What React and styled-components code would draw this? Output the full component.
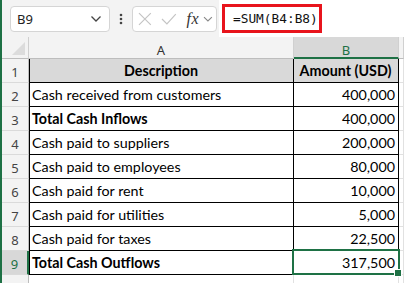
import React from "react";
import styled, { createGlobalStyle } from "styled-components";

const Global = createGlobalStyle`
  html, body { margin: 0; padding: 0; background: #ffffff; }
  body { width: 404px; height: 283px; overflow: hidden; border-left: 2px solid #1e7145; box-sizing: border-box; }
`;

const Page = styled.div`
  width: 402px;
  height: 283px;
  overflow: hidden;
  display: flex;
  flex-direction: column;
  background: #f3f3f3;
`;

const Toolbar = styled.div`
  height: 37px;
  flex: none;
  display: flex;
  align-items: center;
  background: #f3f3f3;
`;

const NameBox = styled.div`
  margin-left: 8px;
  width: 100px;
  height: 26px;
  box-sizing: border-box;
  border: 1px solid #d5d5d5;
  border-radius: 4px;
  background: #fff;
  display: flex;
  align-items: center;
  justify-content: space-between;
  padding: 0 7px 0 6px;
  font-family: "Noto Sans", "Open Sans", sans-serif;
  font-size: 13px;
  color: #222;
`;

const Dots = styled.div`
  width: 22px;
  display: flex;
  justify-content: center;
`;

const FxBox = styled.div`
  width: 85px;
  height: 26px;
  box-sizing: border-box;
  border: 1px solid #d5d5d5;
  border-radius: 4px;
  background: #fff;
  display: flex;
  align-items: center;
  padding: 0 3px 0 5px;
`;

const Fx = styled.span`
  font-family: "Liberation Serif", "DejaVu Serif", serif;
  font-style: italic;
  font-size: 16px;
  color: #333;
  margin-left: 10px;
  margin-right: 4px;
  letter-spacing: 0.5px;
`;

const FormulaInput = styled.div`
  flex: 1;
  align-self: stretch;
  margin-left: 2px;
  background: #fff;
  display: flex;
  align-items: center;
  padding-left: 3px;
`;

const Highlight = styled.div`
  width: 100px;
  height: 29px;
  box-sizing: border-box;
  border: 3px solid #e8141c;
  display: flex;
  align-items: center;
  padding-left: 8px;
  font-family: "DejaVu Sans Mono", "Liberation Mono", monospace;
  font-size: 12.8px;
  color: #111;
`;

const Sheet = styled.div`
  flex: 1;
  display: grid;
  grid-template-columns: 27px 265px 105px 1fr;
  grid-template-rows: 22px repeat(9, 24px) 24px;
  background: #fff;
`;

const Corner = styled.div`
  background: #f3f3f3;
  border-right: 1px solid #cfcfcf;
  border-bottom: 1px solid #bdbdbd;
  position: relative;
  &::after {
    content: "";
    position: absolute;
    right: 3px;
    bottom: 3px;
    width: 0;
    height: 0;
    border-left: 13px solid transparent;
    border-bottom: 13px solid #dcdcdc;
  }
`;

const ColHead = styled.div`
  background: ${(p) => (p.$active ? "#d8d8d8" : "#f3f3f3")};
  border-right: 1px solid #d0d0d0;
  border-bottom: ${(p) => (p.$active ? "2px solid #1e7145" : "1px solid #bdbdbd")};
  display: flex;
  align-items: center;
  justify-content: center;
  font-family: "Noto Sans", "Open Sans", sans-serif;
  font-size: 13px;
  color: ${(p) => (p.$active ? "#1e7145" : "#333")};
  padding-top: ${(p) => (p.$active ? "6px" : "5px")};
`;

const RowHead = styled.div`
  background: ${(p) => (p.$active ? "#d8d8d8" : "#f3f3f3")};
  border-right: ${(p) => (p.$active ? "2px solid #1e7145" : "1px solid #bdbdbd")};
  border-bottom: 1px solid #dadada;
  display: flex;
  align-items: center;
  justify-content: center;
  font-family: "Noto Sans", "Open Sans", sans-serif;
  font-size: 13px;
  color: ${(p) => (p.$active ? "#1e7145" : "#444")};
  padding-top: 3px;
`;

const Cell = styled.div`
  position: relative;
  box-sizing: border-box;
  background: ${(p) => (p.$fill ? "#d9d9d9" : "#fff")};
  border-right: 1px solid #000;
  border-bottom: 1px solid #000;
  border-left: ${(p) => (p.$first ? "1px solid #000" : "none")};
  display: flex;
  align-items: flex-end;
  justify-content: ${(p) => (p.$align === "right" ? "flex-end" : p.$align === "center" ? "center" : "flex-start")};
  padding: 0 3px 3px 2px;
  font-family: "Lato", "Liberation Sans", sans-serif;
  font-size: 14.3px;
  font-weight: ${(p) => (p.$bold ? 700 : 400)};
  color: #000;
  white-space: nowrap;
`;

const Selection = styled.span`
  position: absolute;
  left: -2px;
  top: -2px;
  right: -2px;
  bottom: -1px;
  border: 2px solid #1e7145;
  pointer-events: none;
  &::after {
    content: "";
    position: absolute;
    right: -4px;
    bottom: -4px;
    width: 6px;
    height: 6px;
    background: #1e7145;
    border: 1px solid #fff;
  }
`;

const Blank = styled.div`
  background: #fff;
  border-right: 1px solid #e1e1e1;
  border-bottom: 1px solid #e1e1e1;
`;

const rows = [
  ["Description", "Amount (USD)", "header"],
  ["Cash received from customers", "400,000"],
  ["Total Cash Inflows", "400,000", "bold"],
  ["Cash paid to suppliers", "200,000"],
  ["Cash paid to employees", "80,000"],
  ["Cash paid for rent", "10,000"],
  ["Cash paid for utilities", "5,000"],
  ["Cash paid for taxes", "22,500"],
  ["Total Cash Outflows", "317,500", "bold"],
];

const Chevron = () => (
  <svg width="12" height="8" viewBox="0 0 12 8">
    <path d="M1.5 1.5 L6 6 L10.5 1.5" fill="none" stroke="#444" strokeWidth="1.3" />
  </svg>
);

export default function App() {
  return (
    <>
      <Global />
      <Page>
        <Toolbar>
          <NameBox>
            <span>B9</span>
            <Chevron />
          </NameBox>
          <Dots>
            <svg width="4" height="12" viewBox="0 0 4 12">
              <circle cx="2" cy="2" r="1.3" fill="#444" />
              <circle cx="2" cy="6" r="1.3" fill="#444" />
              <circle cx="2" cy="10" r="1.3" fill="#444" />
            </svg>
          </Dots>
          <FxBox>
            <svg width="14" height="14" viewBox="0 0 14 14">
              <path d="M1 1 L13 13 M13 1 L1 13" stroke="#c4c4c4" strokeWidth="1.2" fill="none" />
            </svg>
            <svg width="16" height="14" viewBox="0 0 16 14" style={{ marginLeft: 9 }}>
              <path d="M1 7 L6 12 L15 2" stroke="#c4c4c4" strokeWidth="1.2" fill="none" />
            </svg>
            <Fx>fx</Fx>
            <svg width="10" height="6" viewBox="0 0 10 6">
              <path d="M1 1 L5 5 L9 1" fill="none" stroke="#888" strokeWidth="1.1" />
            </svg>
          </FxBox>
          <FormulaInput>
            <Highlight>=SUM(B4:B8)</Highlight>
          </FormulaInput>
        </Toolbar>
        <Sheet>
          <Corner />
          <ColHead>A</ColHead>
          <ColHead $active>B</ColHead>
          <ColHead />
          {rows.map(([a, b, kind], i) => {
            const header = kind === "header";
            const bold = header || kind === "bold";
            const selected = i === 8;
            return (
              <React.Fragment key={i}>
                <RowHead $active={selected}>{i + 1}</RowHead>
                <Cell $first $fill={header} $bold={bold} $align={header ? "center" : "left"}>
                  {a}
                </Cell>
                <Cell $fill={header} $bold={header} $align={header ? "center" : "right"}>
                  {b}
                  {selected && <Selection />}
                </Cell>
                <Blank />
              </React.Fragment>
            );
          })}
          <RowHead />
          <Blank />
          <Blank />
          <Blank />
        </Sheet>
      </Page>
    </>
  );
}
